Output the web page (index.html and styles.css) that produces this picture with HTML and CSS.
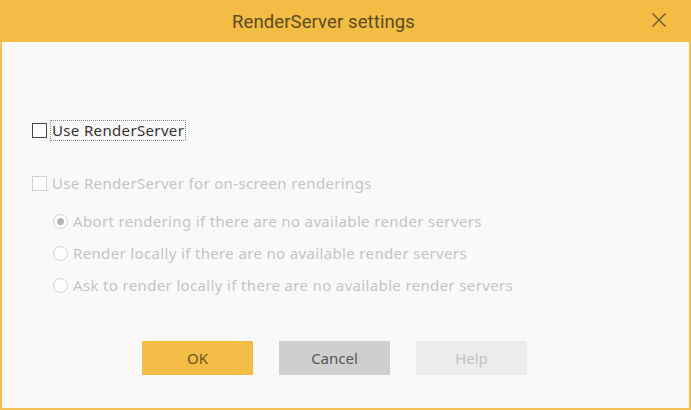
FILE: index.html
```html
<!DOCTYPE html>
<html>
<head>
<meta charset="utf-8">
<link rel="stylesheet" href="styles.css">
</head>
<body>
<div class="dialog">
  <div class="titlebar">
    <span class="title">RenderServer settings</span>
    <span class="close">
      <svg width="16" height="16" viewBox="0 0 16 16"><path d="M1.5 1.5 L14.5 14.5 M14.5 1.5 L1.5 14.5" stroke="#6b5a2c" stroke-width="1.4" fill="none"/></svg>
    </span>
  </div>
  <div class="content">
    <label class="check main">
      <span class="box"></span>
      <span class="focus">Use RenderServer</span>
    </label>
    <label class="check disabled second">
      <span class="box"></span>
      <span class="lbl">Use RenderServer for on-screen renderings</span>
    </label>
    <div class="radios">
      <div class="radio disabled"><span class="circle checked"></span><span class="lbl">Abort rendering if there are no available render servers</span></div>
      <div class="radio disabled"><span class="circle"></span><span class="lbl">Render locally if there are no available render servers</span></div>
      <div class="radio disabled"><span class="circle"></span><span class="lbl">Ask to render locally if there are no available render servers</span></div>
    </div>
    <div class="buttons">
      <button class="btn ok">OK</button>
      <button class="btn cancel">Cancel</button>
      <button class="btn help">Help</button>
    </div>
  </div>
</div>
</body>
</html>
```
FILE: styles.css
```css
html, body {
  margin: 0;
  padding: 0;
  width: 691px;
  height: 410px;
  overflow: hidden;
  background: #f2bc45;
}
.dialog {
  width: 691px;
  height: 410px;
  box-sizing: border-box;
  border: 2px solid #f2c050;
  border-top: 0;
  background: #f9f9f9;
  display: flex;
  flex-direction: column;
  font-family: "Noto Sans", "Open Sans", sans-serif;
}
.titlebar {
  height: 42px;
  background: #f2bc45;
  position: relative;
  display: flex;
  align-items: center;
  justify-content: center;
  margin: 0 -2px;
  padding-right: 44px;
}
.title {
  font-family: "Liberation Sans Narrow", "Roboto", sans-serif;
  font-size: 18.5px;
  color: #5c4b1f;
  padding-top: 2px;
  letter-spacing: 0.1px;
}
.close {
  position: absolute;
  right: 24px;
  top: 12px;
  width: 16px;
  height: 16px;
  display: flex;
}
.content {
  flex: 1;
  display: flex;
  flex-direction: column;
  padding: 78px 0 0 30px;
}
.check {
  display: flex;
  align-items: center;
  gap: 5px;
  font-size: 15px;
  letter-spacing: 0.35px;
  height: 20px;
}
.box {
  width: 13px;
  height: 13px;
  border: 1px solid #444;
  background: #fff;
  margin-left: 0;
}
.main { color: #333; }
.focus {
  border: 1px dotted #888;
  padding: 0 1px 1px 1px;
  line-height: 18px;
  margin-left: -2px;
}
.second { margin-top: 33px; }
.disabled { color: #c4c4c4; }
.disabled .box { border-color: #cfcfcf; }
.radios {
  display: flex;
  flex-direction: column;
  gap: 12px;
  margin: 18px 0 0 21px;
}
.radio {
  display: flex;
  align-items: center;
  gap: 5px;
  font-size: 15px;
  letter-spacing: 0.35px;
  height: 20px;
}
.circle {
  width: 13px;
  height: 13px;
  border-radius: 50%;
  border: 1px solid #cfcfcf;
  background: #fff;
  box-sizing: content-box;
  position: relative;
  flex: none;
}
.circle.checked::after {
  content: "";
  position: absolute;
  left: 3px;
  top: 3px;
  width: 7px;
  height: 7px;
  border-radius: 50%;
  background: #b4b4b4;
}
.buttons {
  display: flex;
  gap: 26px;
  margin: 46px 0 0 110px;
}
.btn {
  width: 111px;
  height: 34px;
  border: 0;
  font-family: "Noto Sans", "Open Sans", sans-serif;
  font-size: 15px;
  padding: 0;
}
.ok { background: #f2bc45; color: #6a5520; }
.cancel { background: #cfcfcf; color: #555; }
.help { background: #ececec; color: #c2c2c2; }
```
